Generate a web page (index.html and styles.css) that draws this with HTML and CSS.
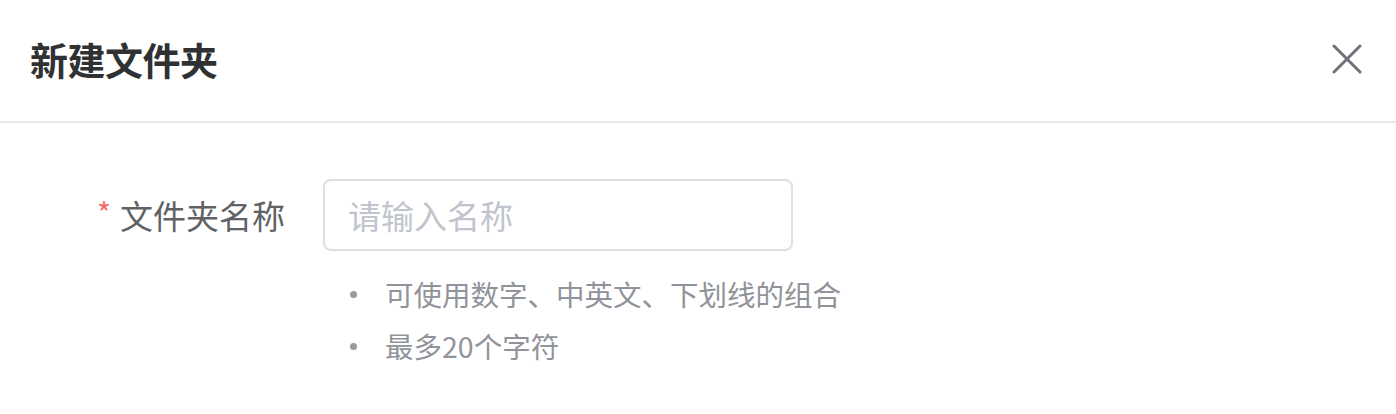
FILE: index.html
```html
<!DOCTYPE html>
<html lang="zh-CN">
<head>
<meta charset="utf-8">
<title>新建文件夹</title>
<link rel="stylesheet" href="styles.css">
</head>
<body>
<div class="dialog">
  <div class="dialog-header">
    <span class="dialog-title">新建文件夹</span>
    <button class="dialog-close" aria-label="关闭">
      <svg width="30" height="30" viewBox="0 0 30 30"><path d="M2 2 L28 28 M28 2 L2 28" stroke="#6f7278" stroke-width="3" fill="none" stroke-linecap="round"/></svg>
    </button>
  </div>
  <div class="dialog-body">
    <div class="form-item">
      <label class="form-label"><span class="required">*</span>文件夹名称</label>
      <div class="form-content">
        <input class="form-input" type="text" placeholder="请输入名称">
        <ul class="hints">
          <li>可使用数字、中英文、下划线的组合</li>
          <li>最多20个字符</li>
        </ul>
      </div>
    </div>
  </div>
</div>
</body>
</html>
```
FILE: styles.css
```css
* { box-sizing: border-box; }
html, body { margin: 0; padding: 0; background: #fff; }
body {
  font-family: "Noto Sans CJK SC", "Noto Sans", sans-serif;
  width: 1396px;
  height: 414px;
  overflow: hidden;
}
.dialog-header {
  height: 123px;
  border-bottom: 2px solid #e6eaf0;
  display: flex;
  align-items: center;
  justify-content: space-between;
  padding: 0 34px 4px 30px;
}
.dialog-title {
  font-size: 38px;
  font-weight: 700;
  color: #303133;
  letter-spacing: -0.5px;
}
.dialog-close {
  border: 0;
  background: none;
  padding: 0;
  width: 30px;
  height: 30px;
  display: flex;
  cursor: pointer;
}
.dialog-body { padding-top: 56px; }
.form-item {
  display: flex;
  align-items: flex-start;
}
.form-label {
  width: 323px;
  padding-right: 38px;
  text-align: right;
  font-size: 33px;
  line-height: 72px;
  height: 72px;
  color: #606266;
}
.required {
  color: #f56c6c;
  font-size: 30px;
  margin-right: 9px;
  position: relative;
  top: -4px;
}
.form-input {
  width: 470px;
  height: 72px;
  border: 2px solid #dcdfe6;
  border-radius: 8px;
  padding: 0 0 0 23px;
  font-family: inherit;
  font-size: 33px;
  color: #606266;
  outline: none;
}
.form-input::placeholder { color: #c0c4cc; }
.hints {
  list-style: none;
  margin: 17px 0 0 0;
  padding: 0;
}
.hints li {
  font-size: 28.5px;
  line-height: 52px;
  color: #909399;
  display: flex;
  align-items: center;
  padding-left: 27px;
}
.hints li::before {
  content: "";
  flex: none;
  width: 7px;
  height: 7px;
  border-radius: 50%;
  background: #999a9e;
  margin-right: 28px;
}
```
